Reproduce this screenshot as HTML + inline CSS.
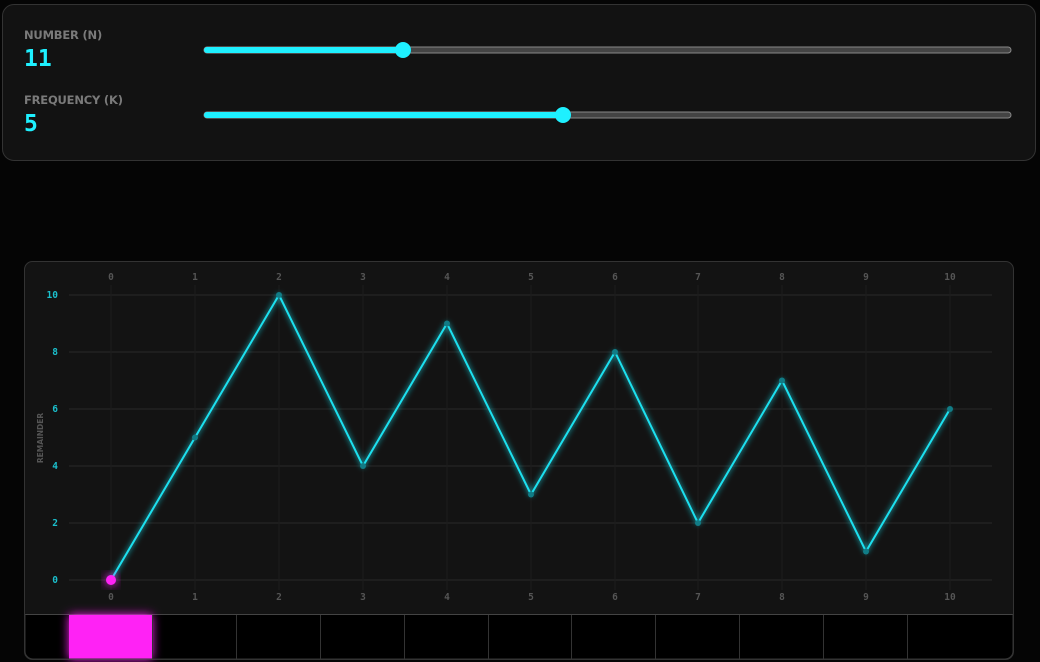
<!DOCTYPE html>
<html><head><meta charset="utf-8"><style>
html,body{margin:0;padding:0;background:#050505;width:1040px;height:662px;overflow:hidden;font-family:"Liberation Sans",sans-serif}
.panel{position:absolute;left:2px;top:4px;width:1034px;height:157px;background:#121212;border:1px solid #333;border-radius:12px;box-sizing:border-box}
.lbl{position:absolute;left:24px;color:#7a7a7a;font-size:11.5px;font-weight:bold;font-family:"DejaVu Sans",sans-serif;letter-spacing:-0.2px}
.val{position:absolute;left:24px;color:#1ef0ff;font-size:23px;font-weight:bold;font-family:"DejaVu Sans Mono",monospace}
</style></head><body>
<div class="panel"></div>
<div class="lbl" style="top:28px">NUMBER (N)</div>
<div class="val" style="top:46px">11</div>
<div class="lbl" style="top:93px">FREQUENCY (K)</div>
<div class="val" style="top:111px">5</div>
<svg width="1040" height="662" style="position:absolute;left:0;top:0" xmlns="http://www.w3.org/2000/svg">
<defs>
<filter id="g" x="-20%" y="-20%" width="140%" height="140%"><feGaussianBlur stdDeviation="3" result="b"/><feMerge><feMergeNode in="b"/><feMergeNode in="SourceGraphic"/></feMerge></filter>
<filter id="gp" x="-50%" y="-50%" width="200%" height="200%"><feGaussianBlur stdDeviation="5" result="b"/><feMerge><feMergeNode in="b"/><feMergeNode in="SourceGraphic"/></feMerge></filter>
</defs>
<rect x="204" y="47" width="807" height="6" rx="3" fill="#444" stroke="#888" stroke-width="1"/>
<rect x="204" y="47" width="199" height="6" rx="3" fill="#1ef0ff"/>
<circle cx="403" cy="50" r="8" fill="#1ef0ff"/>
<rect x="204" y="112" width="807" height="6" rx="3" fill="#444" stroke="#888" stroke-width="1"/>
<rect x="204" y="112" width="359" height="6" rx="3" fill="#1ef0ff"/>
<circle cx="563" cy="115" r="8" fill="#1ef0ff"/>
<rect x="24.5" y="261.5" width="989" height="398" rx="8" fill="#131313" stroke="#333"/>
<g stroke="#222" stroke-width="1.5">
<line x1="69" y1="295" x2="992" y2="295"/><line x1="69" y1="352" x2="992" y2="352"/><line x1="69" y1="409" x2="992" y2="409"/><line x1="69" y1="466" x2="992" y2="466"/><line x1="69" y1="523" x2="992" y2="523"/><line x1="69" y1="580" x2="992" y2="580"/>
</g>
<g stroke="#1c1c1c" stroke-width="1">
<line x1="111" y1="285" x2="111" y2="590"/><line x1="195" y1="285" x2="195" y2="590"/><line x1="279" y1="285" x2="279" y2="590"/><line x1="363" y1="285" x2="363" y2="590"/><line x1="447" y1="285" x2="447" y2="590"/><line x1="531" y1="285" x2="531" y2="590"/><line x1="615" y1="285" x2="615" y2="590"/><line x1="698" y1="285" x2="698" y2="590"/><line x1="782" y1="285" x2="782" y2="590"/><line x1="866" y1="285" x2="866" y2="590"/><line x1="950" y1="285" x2="950" y2="590"/>
</g>
<g font-family="DejaVu Sans Mono,monospace" font-size="9.5" font-weight="bold" fill="#555" text-anchor="middle">
<text x="111" y="280">0</text><text x="195" y="280">1</text><text x="279" y="280">2</text><text x="363" y="280">3</text><text x="447" y="280">4</text><text x="531" y="280">5</text><text x="615" y="280">6</text><text x="698" y="280">7</text><text x="782" y="280">8</text><text x="866" y="280">9</text><text x="950" y="280">10</text>
<text x="111" y="600">0</text><text x="195" y="600">1</text><text x="279" y="600">2</text><text x="363" y="600">3</text><text x="447" y="600">4</text><text x="531" y="600">5</text><text x="615" y="600">6</text><text x="698" y="600">7</text><text x="782" y="600">8</text><text x="866" y="600">9</text><text x="950" y="600">10</text>
</g>
<g font-family="DejaVu Sans Mono,monospace" font-size="9.5" font-weight="bold" fill="#1bbfcc" text-anchor="end">
<text x="58" y="298">10</text><text x="58" y="355">8</text><text x="58" y="412">6</text><text x="58" y="469">4</text><text x="58" y="526">2</text><text x="58" y="583">0</text>
</g>
<text transform="translate(43,438) rotate(-90)" font-family="DejaVu Sans,sans-serif" font-size="7.5" font-weight="bold" fill="#555" text-anchor="middle">REMAINDER</text>
<polyline filter="url(#g)" fill="none" stroke="#1ee0ef" stroke-width="2" points="111,580 195,437.5 279,295 363,466 447,323.5 531,494.5 615,352 698,523 782,380.5 866,551.5 950,409"/>
<g fill="#117c86">
<circle cx="195" cy="437.5" r="3"/><circle cx="279" cy="295" r="3"/><circle cx="363" cy="466" r="3"/><circle cx="447" cy="323.5" r="3"/><circle cx="531" cy="494.5" r="3"/><circle cx="615" cy="352" r="3"/><circle cx="698" cy="523" r="3"/><circle cx="782" cy="380.5" r="3"/><circle cx="866" cy="551.5" r="3"/><circle cx="950" cy="409" r="3"/>
</g>
<circle cx="111" cy="580" r="5" fill="#ff22f5" filter="url(#gp)"/>
<path d="M25,614 H1013 V651 a8,8 0 0 1 -8,8 H33 a8,8 0 0 1 -8,-8 Z" fill="#000"/>
<line x1="25" y1="614.5" x2="1013" y2="614.5" stroke="#444"/>
<g stroke="#333" stroke-width="1">
<line x1="236.5" y1="615" x2="236.5" y2="659"/><line x1="320.5" y1="615" x2="320.5" y2="659"/><line x1="404.5" y1="615" x2="404.5" y2="659"/><line x1="488.5" y1="615" x2="488.5" y2="659"/><line x1="571.5" y1="615" x2="571.5" y2="659"/><line x1="655.5" y1="615" x2="655.5" y2="659"/><line x1="739.5" y1="615" x2="739.5" y2="659"/><line x1="823.5" y1="615" x2="823.5" y2="659"/><line x1="907.5" y1="615" x2="907.5" y2="659"/>
</g>
<rect x="69" y="615" width="83" height="44" fill="#ff22f5" filter="url(#gp)"/>
<line x1="152.5" y1="615" x2="152.5" y2="659" stroke="#333"/>
<path d="M25,614 V651 a8,8 0 0 0 8,8 H1005 a8,8 0 0 0 8,-8 V614" fill="none" stroke="#333"/>
</svg>
</body></html>
